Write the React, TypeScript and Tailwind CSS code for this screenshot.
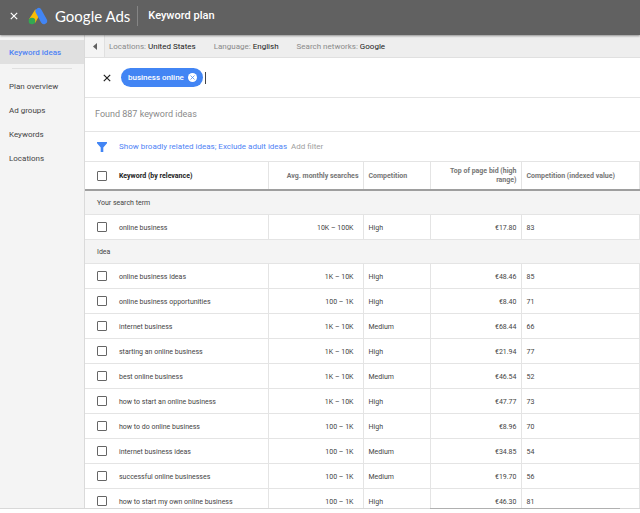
import { useState } from 'react';

interface Idea {
  keyword: string;
  searches: string;
  competition: string;
  bid: string;
  index: number;
}

const searchTerms: Idea[] = [
  { keyword: 'online business', searches: '10K – 100K', competition: 'High', bid: '€17.80', index: 83 },
];

const ideas: Idea[] = [
  { keyword: 'online business ideas', searches: '1K – 10K', competition: 'High', bid: '€48.46', index: 85 },
  { keyword: 'online business opportunities', searches: '100 – 1K', competition: 'High', bid: '€8.40', index: 71 },
  { keyword: 'internet business', searches: '1K – 10K', competition: 'Medium', bid: '€68.44', index: 66 },
  { keyword: 'starting an online business', searches: '1K – 10K', competition: 'High', bid: '€21.94', index: 77 },
  { keyword: 'best online business', searches: '1K – 10K', competition: 'Medium', bid: '€46.54', index: 52 },
  { keyword: 'how to start an online business', searches: '1K – 10K', competition: 'High', bid: '€47.77', index: 73 },
  { keyword: 'how to do online business', searches: '100 – 1K', competition: 'High', bid: '€8.96', index: 70 },
  { keyword: 'internet business ideas', searches: '100 – 1K', competition: 'Medium', bid: '€34.85', index: 54 },
  { keyword: 'successful online businesses', searches: '100 – 1K', competition: 'Medium', bid: '€19.70', index: 56 },
  { keyword: 'how to start my own online business', searches: '100 – 1K', competition: 'High', bid: '€46.30', index: 81 },
];

const navItems = ['Plan overview', 'Ad groups', 'Keywords', 'Locations'];

const settings = [
  { label: 'Locations', value: 'United States' },
  { label: 'Language', value: 'English' },
  { label: 'Search networks', value: 'Google' },
];

function Cross({ className }: { className: string }) {
  return (
    <svg viewBox="0 0 10 10" className={className} fill="none" stroke="currentColor" strokeWidth="1.5">
      <path d="M1 1l8 8M9 1L1 9" />
    </svg>
  );
}

function AdsLogo() {
  return (
    <svg viewBox="0 0 20 18" className="h-[18px] w-5 shrink-0">
      <path d="M7.2 2.4L13 5.6L7.2 15.8L0.9 12.6z" fill="#fbbc04" />
      <path d="M10.6 4.2L15.9 13.9" stroke="#4285f4" strokeWidth="6.4" strokeLinecap="round" />
      <circle cx="4" cy="14" r="3.3" fill="#34a853" />
    </svg>
  );
}

function Tick({ label }: { label: string }) {
  return (
    <input
      type="checkbox"
      aria-label={label}
      className="block size-[10px] appearance-none rounded-[1px] border border-[#666] bg-white checked:bg-[#4285f4]"
    />
  );
}

function GroupRow({ title }: { title: string }) {
  return (
    <tr className="h-6 border-b border-[#e4e4e4] bg-[#f4f4f4]">
      <th colSpan={6} scope="colgroup" className="pt-[3px] pl-3 text-left font-normal">
        {title}
      </th>
    </tr>
  );
}

function IdeaRow({ idea }: { idea: Idea }) {
  return (
    <tr className="h-[25px] border-b border-[#e4e4e4]">
      <td className="pl-3">
        <Tick label={`Select ${idea.keyword}`} />
      </td>
      <td className="border-r border-[#e4e4e4] pt-[3px]">{idea.keyword}</td>
      <td className="border-r border-[#e4e4e4] pt-[3px] pr-[9px] text-right">{idea.searches}</td>
      <td className="border-r border-[#e4e4e4] pt-[3px] pl-[5px]">{idea.competition}</td>
      <td className="border-r border-[#e4e4e4] pt-[3px] pr-1 text-right">{idea.bid}</td>
      <td className="border-r border-[#e4e4e4] pt-[3px] pl-[5px]">{idea.index}</td>
    </tr>
  );
}

export default function App() {
  const [terms, setTerms] = useState(['business online']);

  return (
    <div className="flex h-screen flex-col overflow-hidden bg-white pb-1 font-['Roboto',sans-serif] text-[7px] leading-[9px] text-[#444]">
      <header className="z-10 flex h-[35px] shrink-0 items-center bg-[#616161] pb-1 pl-[10px] text-white shadow-[0_1px_2px_rgba(0,0,0,0.4)]">
        <button aria-label="Close">
          <Cross className="size-2" />
        </button>
        <div className="ml-[10px] flex items-center gap-[7px]">
          <AdsLogo />
          <span className="font-['Lato',sans-serif] text-[15px] leading-5">Google Ads</span>
        </div>
        <div className="ml-[7px] h-5 w-px bg-[#858585]" />
        <h1 className="ml-[10px] text-[11px] leading-4 font-medium">Keyword plan</h1>
      </header>

      <div className="flex min-h-0 flex-1">
        <nav className="w-[85px] shrink-0 border-r border-[#dadada] bg-[#f4f4f4] pt-[5px] text-[8px]">
          <a href="#ideas" className="flex h-6 items-center bg-[#e0e0e0] pl-[9px] font-medium text-[#4f83f5]">
            Keyword ideas
          </a>
          <hr className="mx-3 mt-1 mb-[5px] border-[#e0e0e0]" />
          {navItems.map((item) => (
            <a key={item} href="#plan" className="flex h-6 items-center pl-[9px]">
              {item}
            </a>
          ))}
        </nav>

        <main className="min-w-0 flex-1 overflow-hidden">
          <div className="flex h-[23px] items-center border-b border-[#e0e0e0] bg-[#eee] text-[8px]">
            <button aria-label="Collapse menu" className="flex h-full w-5 items-center justify-center border-r border-[#e0e0e0] bg-[#f4f4f4]">
              <svg viewBox="0 0 4 7" className="h-[7px] w-1 fill-[#616161]">
                <path d="M4 0v7L0 3.5z" />
              </svg>
            </button>
            <dl className="flex gap-[18px] pl-1">
              {settings.map((s) => (
                <div key={s.label} className="flex gap-[2px]">
                  <dt className="text-[#8a8a8a]">{s.label}:</dt>
                  <dd className="text-[#212121]">{s.value}</dd>
                </div>
              ))}
            </dl>
          </div>

          <div className="flex h-10 items-center border-b border-[#e4e4e4] pl-[18px] text-[8px]">
            <button aria-label="Clear search" className="text-[#212121]" onClick={() => setTerms([])}>
              <Cross className="size-2" />
            </button>
            <div className="ml-[10px] flex flex-1 items-center gap-[2px]">
              {terms.map((term) => (
                <span key={term} className="flex h-[19px] items-center gap-1 rounded-full bg-[#4285f4] pr-[6px] pl-[7px] font-medium text-white">
                  {term}
                  <button
                    aria-label={`Remove ${term}`}
                    className="flex size-[9px] items-center justify-center rounded-full bg-white text-[#4285f4]"
                    onClick={() => setTerms(terms.filter((t) => t !== term))}
                  >
                    <Cross className="size-[5px]" />
                  </button>
                </span>
              ))}
              <input aria-label="Add keyword" className="h-3 min-w-0 flex-1 border-l border-[#444] outline-none" />
            </div>
          </div>

          <p className="flex h-[34px] items-center border-b border-[#e4e4e4] pl-[10px] text-[9px] text-[#8a8a8a]">
            Found 887 keyword ideas
          </p>

          <div className="flex h-[30px] items-center border-b border-[#e4e4e4] pl-3 text-[8px]">
            <svg viewBox="0 0 10 10" className="size-[10px] fill-[#4285f4]">
              <path d="M0 0h10v1.2L6.3 5.6V10H3.7V5.6L0 1.2z" />
            </svg>
            <button className="ml-3 text-[#4f83f5]">Show broadly related ideas; Exclude adult ideas</button>
            <button className="ml-1 text-[#9e9e9e]">Add filter</button>
          </div>

          <table className="w-full table-fixed border-collapse">
            <colgroup>
              <col className="w-[34px]" />
              <col className="w-[149px]" />
              <col className="w-[95px]" />
              <col className="w-[67px]" />
              <col className="w-[91px]" />
              <col />
            </colgroup>
            <thead>
              <tr className="h-[28px] border-b-2 border-[#9e9e9e] text-[#757575]">
                <th className="pl-3">
                  <Tick label="Select all" />
                </th>
                <th className="border-r border-r-[#e4e4e4] pt-[2px] text-left font-bold text-[#212121]">Keyword (by relevance)</th>
                <th className="border-r border-r-[#e4e4e4] pt-[2px] pr-1 text-right font-bold">Avg. monthly searches</th>
                <th className="border-r border-r-[#e4e4e4] pt-[2px] pl-[5px] text-left font-bold">Competition</th>
                <th className="border-r border-r-[#e4e4e4] pr-1 pl-4 text-right font-bold">Top of page bid (high range)</th>
                <th className="border-r border-r-[#e4e4e4] pt-[2px] pl-[5px] text-left font-bold">Competition (indexed value)</th>
              </tr>
            </thead>
            <tbody>
              <GroupRow title="Your search term" />
              {searchTerms.map((idea) => (
                <IdeaRow key={idea.keyword} idea={idea} />
              ))}
              <GroupRow title="Idea" />
              {ideas.map((idea) => (
                <IdeaRow key={idea.keyword} idea={idea} />
              ))}
            </tbody>
          </table>
        </main>
      </div>

      {/* horizontal scroll track */}
      <div className="flex h-px shrink-0 bg-[#d8d8d8] pr-5 pl-[430px]">
        <div className="flex-1 bg-[#b0b0b0]" />
      </div>
    </div>
  );
}
